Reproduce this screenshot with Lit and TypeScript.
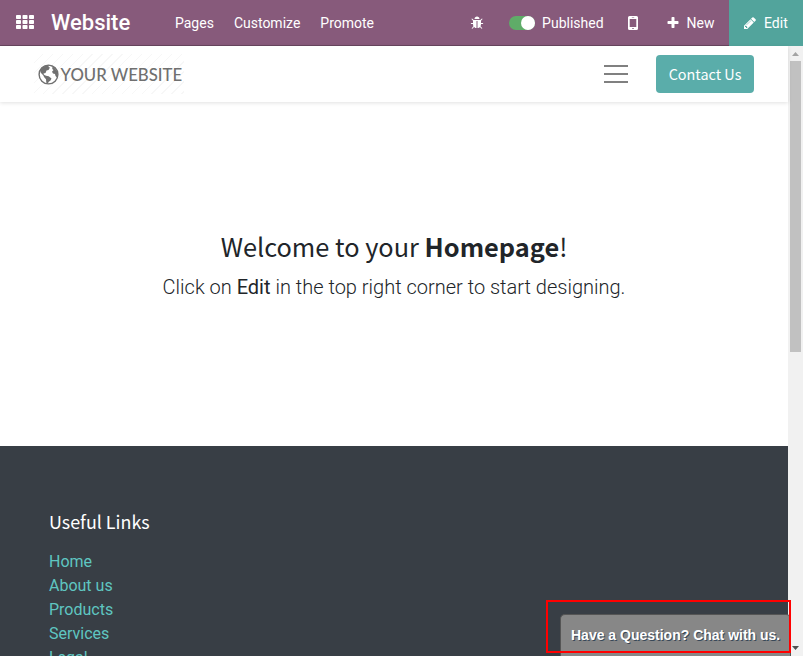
import { LitElement, html, css, svg } from "lit";
import { customElement } from "lit/decorators.js";

const BUG = "M1696 960q0 26-19 45t-45 19h-224q0 171-67 290l208 209q19 19 19 45t-19 45q-18 19-45 19t-45-19l-198-197q-5 5-15 13t-42 28.5-65 36.5-82 29-97 13v-896h-128v896q-51 0-101.5-13.5t-87-33-66-39-43.5-32.5l-15-14-183 207q-20 21-48 21-24 0-43-16-19-18-20.5-44.5t15.5-46.5l202-227q-58-114-58-274h-224q-26 0-45-19t-19-45 19-45 45-19h224v-294l-173-173q-19-19-19-45t19-45 45-19 45 19l173 173h844l173-173q19-19 45-19t45 19 19 45-19 45l-173 173v294h224q26 0 45 19t19 45zm-480-576h-640q0-133 93.5-226.5t226.5-93.5 226.5 93.5 93.5 226.5z";
const PENCIL = "M491 1536l91-91-235-235-91 91v107h128v128h107zm523-928q0-22-22-22-10 0-17 7l-542 542q-7 7-7 17 0 22 22 22 10 0 17-7l542-542q7-7 7-17zm-54-192l416 416-832 832h-416v-416zm683 96q0 53-37 90l-166 166-416-416 166-165q36-38 90-38 53 0 91 38l235 234q37 39 37 91z";
const PLUS = "M1600 736v192q0 40-28 68t-68 28h-416v416q0 40-28 68t-68 28h-192q-40 0-68-28t-28-68v-416h-416q-40 0-68-28t-28-68v-192q0-40 28-68t68-28h416v-416q0-40 28-68t68-28h192q40 0 68 28t28 68v416h416q40 0 68 28t28 68z";

const glyph = (d: string) => html`<svg class="glyph" viewBox="0 0 1792 1792"><path d=${d} /></svg>`;

@customElement("app-navbar")
export class AppNavbar extends LitElement {
  static styles = css`
    :host { display: flex; box-sizing: border-box; height: 46px; flex: none; background: #875a7b; border-bottom: 1px solid #68465f; color: #fff; font: 14px/47px Roboto, sans-serif; }
    .apps { width: 18px; height: 14px; margin: 15px 17px 0 16px; fill: #fff; }
    .brand { font-size: 22px; font-weight: 500; line-height: 46px; width: 124px; }
    .menu { display: flex; gap: 20px; flex: 1; }
    .glyph { width: 14px; height: 14px; fill: #fff; display: block; }
    .right { display: flex; align-items: center; height: 45px; }
    .label { padding-top: 2px; line-height: 45px; }
    .switch { width: 26px; height: 14px; border-radius: 7px; background: #5fac68; margin: 0 7px 0 25px; display: flex; justify-content: flex-end; align-items: center; }
    .knob { width: 14px; height: 14px; border-radius: 50%; background: #fff; }
    .phone { width: 10px; height: 14px; margin: 0 28px 0 24px; }
    .new { display: flex; align-items: center; gap: 7px; padding-right: 14.5px; }
    .edit { display: flex; align-items: center; gap: 7px; height: 46px; align-self: flex-start; box-sizing: border-box; width: 74px; padding: 0 0 1px 14px; background: #52a49c; }
  `;
  render() {
    return html`
      <svg class="apps" viewBox="0 0 18 14">
        ${[0, 5, 10].map((y) => [0, 6.5, 13].map((x) => svg`<rect x=${x} y=${y} width="5" height="4" rx="0.8" />`))}
      </svg>
      <span class="brand">Website</span>
      <nav class="menu"><span>Pages</span><span>Customize</span><span>Promote</span></nav>
      <div class="right">
        ${glyph(BUG)}
        <span class="switch"><span class="knob"></span></span>
        <span class="label">Published</span>
        <svg class="phone" viewBox="0 0 10 14">
          <path fill="#fff" fill-rule="evenodd" d="M1.500 0h7Q10 0 10 1.500v11Q10 14 8.500 14h-7Q0 14 0 12.500v-11Q0 0 1.500 0zM1.700 3v8h6.600V3zM4.300 12h1.400v1H4.300zM3.800 1.300h2.400v.5H3.800z" />
        </svg>
        <span class="new">${glyph(PLUS)}<span class="label">New</span></span>
        <span class="edit">${glyph(PENCIL)}<span class="label">Edit</span></span>
      </div>`;
  }
}

@customElement("site-header")
export class SiteHeader extends LitElement {
  static styles = css`
    :host { display: flex; align-items: center; height: 56px; flex: none; box-sizing: border-box; padding: 0 34px; background: #fff; box-shadow: 0 1px 4px rgba(0, 0, 0, 0.12); position: relative; }
    .logo { display: flex; align-items: center; gap: 1.5px; width: 150px; height: 40px; box-sizing: border-box; padding-left: 4px; color: #707070; font: 500 16.75px/40px Lato, sans-serif; white-space: nowrap; background: repeating-linear-gradient(135deg, #fff 0 6px, #f7f7f7 6px 7px); }
    .name { line-height: 38px; padding-top: 2px; }
    .globe { width: 21px; height: 21px; flex: none; }
    .burger { display: flex; flex-direction: column; gap: 6px; width: 24px; margin-left: auto; margin-right: 28px; }
    .bar { height: 2px; background: #808080; }
    .contact { width: 98px; height: 38px; border-radius: 4px; background: #5aadaa; color: #fff; font: 14.4px/38px "Noto Sans CJK SC", sans-serif; text-align: center; white-space: nowrap; }
  `;
  render() {
    return html`
      <div class="logo">
        <svg class="globe" viewBox="0 0 21 21">
          <circle cx="10.500" cy="10.500" r="9.400" fill="#fff" stroke="#707070" stroke-width="1.400" />
          <path fill="#707070" d="M2 6.500L5 3l4-2 2 .5-.5 1.500 1.500.5L10.500 6l-2 .6L7.500 9l-2 .5.5 1.300 2 1 2.700.4 2.800 2.300-1 2-2 1.500-.5 1.800-1.700-1-.3-3.500-1.800-2-1-2L3 9zM13 2l3 1.300 3 3.700.7 3-.7 3.500-1.500-1.500-.5-2-2-.6-1-1.700 1.500-1.700-1.300-1 .3-1.500z" />
        </svg>
        <span class="name">YOUR WEBSITE</span>
      </div>
      <div class="burger"><i class="bar"></i><i class="bar"></i><i class="bar"></i></div>
      <div class="contact">Contact Us</div>`;
  }
}

@customElement("site-footer")
export class SiteFooter extends LitElement {
  static styles = css`
    :host { display: block; flex: 1; min-height: 0; overflow: hidden; box-sizing: border-box; padding: 63px 49px 0; background: #383e45; }
    .title { color: #fff; font: 17.9px/24px "Noto Sans CJK SC", sans-serif; margin-bottom: 17px; }
    .link { display: block; color: #5fc6c1; font: 16px/24px Roboto, sans-serif; }
  `;
  render() {
    return html`<div class="title">Useful Links</div>
      ${["Home", "About us", "Products", "Services", "Legal"].map((t) => html`<span class="link">${t}</span>`)}`;
  }
}

@customElement("app-root")
export class AppRoot extends LitElement {
  static styles = css`
    :host { display: flex; flex-direction: column; width: 803px; height: 656px; overflow: hidden; position: relative; background: #fff; }
    .body { display: flex; flex: 1; min-height: 0; }
    .page { display: flex; flex-direction: column; width: 788px; }
    .hero { height: 344px; flex: none; box-sizing: border-box; padding-top: 125px; text-align: center; color: #212529; white-space: nowrap; }
    .welcome { font: 25.35px/38px "Noto Sans CJK SC", sans-serif; }
    .lead { font: 300 20px/30px Roboto, sans-serif; margin-top: 7px; }
    .lead b { font-weight: 400; }
    .track { width: 15px; background: #f1f1f1; display: flex; flex-direction: column; align-items: center; justify-content: space-between; }
    .thumb { width: 11px; height: 291px; background: #c1c1c1; margin-top: 5px; margin-bottom: auto; }
    .arrow { width: 7px; height: 4px; margin-top: 6px; fill: #a3a3a3; }
    .down { fill: #505050; margin: 0 0 6px; }
    .chat { position: absolute; left: 560px; top: 614px; width: 231px; height: 42px; box-sizing: border-box; border: 1px solid #555; border-bottom: 0; border-radius: 5px 5px 0 0; background: #878787; color: #fff; font: bold 14px/40px "Liberation Sans", sans-serif; padding-left: 10px; text-shadow: 1px 1px 0 #384858; white-space: nowrap; }
    .mark { position: absolute; left: 546px; top: 600px; width: 245px; height: 53px; box-sizing: border-box; border: 2px solid #f00; }
  `;
  render() {
    return html`
      <app-navbar></app-navbar>
      <div class="body">
        <main class="page">
          <site-header></site-header>
          <section class="hero">
            <div class="welcome">Welcome to your <b>Homepage</b>!</div>
            <div class="lead">Click on <b>Edit</b> in the top right corner to start designing.</div>
          </section>
          <site-footer></site-footer>
        </main>
        <div class="track">
          <svg class="arrow" viewBox="0 0 7 4"><path d="M0 4L3.500 0 7 4z" /></svg>
          <div class="thumb"></div>
          <svg class="arrow down" viewBox="0 0 7 4"><path d="M0 0L3.500 4 7 0z" /></svg>
        </div>
      </div>
      <div class="chat">Have a Question? Chat with us.</div>
      <div class="mark"></div>`;
  }
}
